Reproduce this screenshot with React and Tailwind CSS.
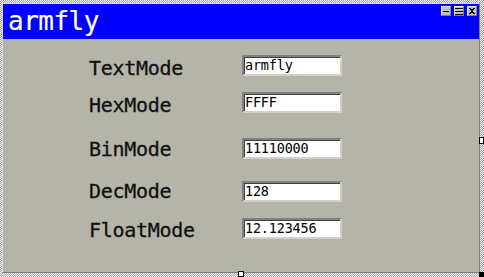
import React from "react";

const rows = [
  { label: "TextMode", value: "armfly", mt: "mt-[16px]", lab: "pt-[5px]" },
  { label: "HexMode", value: "FFFF", mt: "mt-[16px]", lab: "pt-[5px]" },
  { label: "BinMode", value: "11110000", mt: "mt-[25px]", lab: "pt-[2px]" },
  { label: "DecMode", value: "128", mt: "mt-[22px]", lab: "pt-0" },
  { label: "FloatMode", value: "12.123456", mt: "mt-[16px]", lab: "pt-[3px]" },
];

function TitleButton({ kind }) {
  return (
    <div className="w-[10px] h-[10px] bg-[#c0c0c0] border border-t-[#e8e8e8] border-l-[#e8e8e8] border-r-[#808080] border-b-[#808080] flex items-center justify-center">
      <svg width="8" height="8" viewBox="0 0 8 8" shapeRendering="crispEdges">
        {kind === "min" && <rect x="1" y="4" width="6" height="1" fill="#000" />}
        {kind === "max" && (
          <g fill="#000">
            <rect x="0" y="1" width="8" height="1" />
            <rect x="0" y="4" width="8" height="1" />
            <rect x="0" y="7" width="8" height="1" />
          </g>
        )}
        {kind === "close" && (
          <g fill="#000">
            <rect x="1" y="1" width="2" height="1" />
            <rect x="5" y="1" width="2" height="1" />
            <rect x="2" y="2" width="4" height="1" />
            <rect x="3" y="3" width="2" height="2" />
            <rect x="2" y="5" width="4" height="1" />
            <rect x="1" y="6" width="2" height="1" />
            <rect x="5" y="6" width="2" height="1" />
          </g>
        )}
      </svg>
    </div>
  );
}

export default function App() {
  return (
    <div className="relative w-[484px] h-[277px] pt-[3px] pl-[2px] pr-[4px] pb-[4px] bg-[repeating-conic-gradient(#9c9c9c_0_25%,#ffffff_0_50%)] bg-[length:2px_2px]">
      {/* -------- WINDOW -------- */}
      <div className="w-full h-full flex flex-col bg-[#b4b4a8] border border-t-[#d8d8d0] border-l-[#d8d8d0] border-r-[#808078] border-b-[#808078]">
        {/* title bar */}
        <div className="h-[35px] bg-[#0000ff] flex items-start justify-between pl-[5px] pr-[2px]">
          <span className="text-white text-[26px] leading-[34px] font-['DejaVu_Sans_Mono',monospace] tracking-[-0.5px] [-webkit-text-stroke:0.2px_#fff]">
            armfly
          </span>
          <div className="flex gap-[3px] mt-[2px]">
            <TitleButton kind="min" />
            <TitleButton kind="max" />
            <TitleButton kind="close" />
          </div>
        </div>

        {/* body */}
        <div className="flex flex-col pl-[86px]">
          {rows.map((r) => (
            <div key={r.label} className={`flex items-center h-[21px] ${r.mt}`}>
              <div className={`w-[153px] text-[20px] leading-[21px] text-[#101010] font-['DejaVu_Sans_Mono',monospace] tracking-[-0.3px] [-webkit-text-stroke:0.3px_#101010] ${r.lab}`}>
                {r.label}
              </div>
              <div className="w-[100px] h-[21px] bg-white border-2 border-t-[#808080] border-l-[#808080] border-r-[#d4d0c8] border-b-[#d4d0c8] shadow-[inset_1px_1px_0_#404040] pl-[1px] flex items-center">
                <span className="text-[13.5px] leading-none text-black font-['DejaVu_Sans_Mono',monospace] tracking-[-0.2px]">
                  {r.value}
                </span>
              </div>
            </div>
          ))}
        </div>
      </div>

      {/* -------- SELECTION HANDLES -------- */}
      <div className="absolute left-[238px] top-[271px] w-[6px] h-[6px] bg-white border border-black" />
      <div className="absolute left-[479px] top-[137px] w-[5px] h-[7px] bg-white border border-black" />
      <div className="absolute left-[479px] top-[272px] w-[5px] h-[5px] bg-black" />
    </div>
  );
}
